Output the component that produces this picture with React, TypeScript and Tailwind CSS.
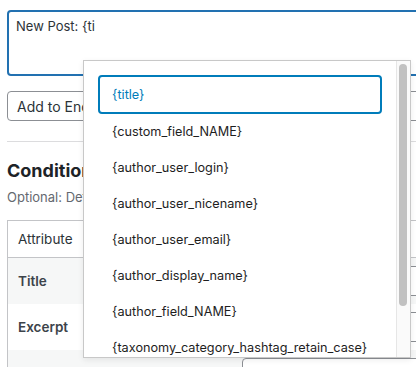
const suggestions = [
  "{title}",
  "{custom_field_NAME}",
  "{author_user_login}",
  "{author_user_nicename}",
  "{author_user_email}",
  "{author_display_name}",
  "{author_field_NAME}",
  "{taxonomy_category_hashtag_retain_case}",
];

const rows = [
  { name: "Title", shade: true },
  { name: "Excerpt", shade: false },
  { name: "Content", shade: true },
];

export default function App() {
  return (
    <div className="relative w-[416px] h-[367px] overflow-hidden bg-white text-[#2c3338] font-['Inter','Liberation_Sans',sans-serif]">
      <div className="w-[460px] pl-[7px] pt-[10px]">
        {/* Template textarea */}
        <div className="h-[66px] rounded-[4px] border-2 border-[#2271b1] px-[7px] pt-[5px] text-[13px] leading-[18px]">
          New Post: {"{ti"}
        </div>

        <div className="mt-[15px] h-[30px] rounded-[4px] border border-[#8c8f94] px-[9px] flex items-center text-[14px]">
          Add to End
        </div>

        <div className="mt-[20px] border-t border-[#dcdcde]" />

        <h2 className="mt-[18px] text-[18px] leading-[22px] font-bold text-[#1d2327]">Conditions</h2>
        <p className="mt-[7px] text-[13px] leading-[16px] text-[#646970] whitespace-nowrap">
          Optional: Define conditions that a post must meet to be share
        </p>

        {/* Conditions table */}
        <div className="mt-[15px] border border-[#c3c4c7] text-[13.5px]">
          <div className="h-[37px] flex items-center border-b border-[#c3c4c7]">
            <div className="w-[226px] pl-[10px]">Attribute</div>
            <div className="pl-[8px]">Condition</div>
          </div>
          {rows.map((r) => (
            <div key={r.name} className={`h-[46px] flex items-center ${r.shade ? "bg-[#f6f7f7]" : "bg-white"}`}>
              <div className="w-[226px] pl-[10px] font-semibold text-[#3c434a]">{r.name}</div>
              <div className="flex-1 pl-[8px] pr-[8px]">
                <div className="h-[30px] rounded-[4px] border border-[#8c8f94] bg-white flex items-center px-[8px]">
                  No Conditions
                </div>
              </div>
            </div>
          ))}
        </div>
      </div>

      {/* Placeholder suggestions popup */}
      <div className="absolute left-[83px] top-[60px] w-[328px] h-[298px] bg-white border border-[#c8c8c8] shadow-[0_2px_6px_rgba(0,0,0,0.08)] flex">
        <div className="flex-1 pt-[14px] px-[14px] flex flex-col text-[12.7px]">
          {suggestions.map((s, i) =>
            i === 0 ? (
              <div key={s} className="h-[39px] shrink-0 rounded-[4px] border-2 border-[#007cba] pl-[12px] flex items-center text-[#007cba]">
                {s}
              </div>
            ) : (
              <div key={s} className="h-[36px] shrink-0 pl-[14px] flex items-center text-[#1e1e1e] whitespace-nowrap">
                {s}
              </div>
            )
          )}
        </div>
        <div className="w-[14px] border-l border-[#e6e6e6] bg-[#fafafa] pt-[3px] pl-[2px]">
          <div className="w-[8px] h-[242px] rounded-full bg-[#c1c1c1]" />
        </div>
      </div>
    </div>
  );
}
